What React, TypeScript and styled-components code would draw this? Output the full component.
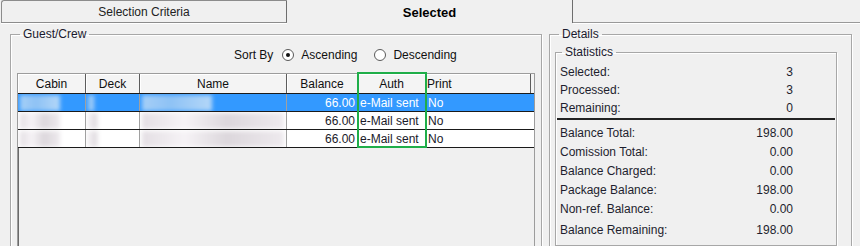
import React from 'react';
import styled, { createGlobalStyle, css } from 'styled-components';

const GlobalStyle = createGlobalStyle`
  html, body {
    margin: 0;
    padding: 0;
    background: #f0f0f0;
  }
  body {
    font-family: "Liberation Sans", Arial, sans-serif;
    font-size: 12px;
    color: #101010;
  }
`;

const Window = styled.div`
  width: 860px;
  height: 246px;
  overflow: hidden;
  background: #f0f0f0;
`;

const TabStrip = styled.div`
  display: flex;
  height: 23px;
  padding-left: 1px;
`;

const Tab = styled.div<{ $active?: boolean }>`
  width: 286px;
  display: flex;
  align-items: center;
  justify-content: center;
  box-sizing: border-box;
  border-right: 1px solid #6e6e6e;
  ${p =>
    p.$active
      ? css`
          font-weight: bold;
          font-size: 13px;
          color: #000;
          padding-top: 2px;
        `
      : css`
          border-left: 1px solid #8c8c8c;
          border-top: 1px solid #8c8c8c;
          border-bottom: 1px solid #8c8c8c;
          border-top-left-radius: 3px;
          color: #222;
          box-shadow: 0 1px 0 #fff;
        `}
`;

const TabFiller = styled.div`
  flex: 1;
  border-bottom: 1px solid #999;
  box-shadow: 0 1px 0 #fff;
`;

const Body = styled.div`
  display: flex;
  gap: 7px;
  padding: 4px 0 0 10px;
`;

const GroupBox = styled.fieldset<{ $width: number }>`
  width: ${p => p.$width}px;
  box-sizing: border-box;
  margin: 0;
  padding: 0;
  border: 1px solid #a7a7a7;
  box-shadow: 1px 1px 0 #fff, inset 1px 1px 0 #fff;
  min-width: 0;
  legend {
    margin-left: 9px;
    padding: 0 3px;
    line-height: 14px;
    color: #1a1a2e;
  }
`;

const GuestInner = styled.div`
  padding: 5px 0 0 6px;
  height: 230px;
`;

const SortRow = styled.div`
  display: flex;
  align-items: center;
  height: 18px;
  padding-left: 217px;
  margin-bottom: 9px;
`;

const SortLabel = styled.span`
  margin-right: 9px;
`;

const RadioOption = styled.label`
  display: inline-flex;
  align-items: center;
  gap: 7px;
  margin-right: 17px;
`;

const RadioDot = styled.span<{ $checked?: boolean }>`
  width: 12px;
  height: 12px;
  box-sizing: border-box;
  border-radius: 50%;
  border: 1px solid #5a5a5a;
  background: #fff;
  display: inline-flex;
  align-items: center;
  justify-content: center;
  &::after {
    content: '';
    width: 4px;
    height: 4px;
    border-radius: 50%;
    background: ${p => (p.$checked ? '#111' : 'transparent')};
  }
`;

const Grid = styled.div`
  position: relative;
  width: 518px;
  height: 190px;
  box-sizing: border-box;
  border: 1px solid #9c9c9c;
  box-shadow: inset 1px 1px 0 #6a6a6a;
  background: #f0f0f0;
`;

const COLS = '68px 54px 147px 71px 68px 105px';

const HeaderRow = styled.div`
  display: grid;
  grid-template-columns: ${COLS};
  height: 19px;
  border-bottom: 1px solid #1a1a1a;
  background: #f4f4f4;
`;

const HeaderCell = styled.div<{ $align?: 'left' | 'center' }>`
  display: flex;
  align-items: center;
  justify-content: ${p => (p.$align === 'left' ? 'flex-start' : 'center')};
  padding-left: ${p => (p.$align === 'left' ? '1px' : '0')};
  border-right: 1px solid #5c5c5c;
  box-shadow: inset 1px 1px 0 #fff;
`;

const DataRow = styled.div<{ $selected?: boolean }>`
  display: grid;
  grid-template-columns: ${COLS};
  height: 17px;
  border-bottom: 1px solid #1a1a1a;
  background: ${p => (p.$selected ? '#3399ff' : '#fff')};
  color: ${p => (p.$selected ? '#fff' : '#1a1a2a')};
`;

const Cell = styled.div<{ $align?: 'left' | 'right' }>`
  display: flex;
  align-items: center;
  justify-content: ${p => (p.$align === 'right' ? 'flex-end' : 'flex-start')};
  padding: 0 2px;
  border-right: 1px solid #a0a0a0;
  overflow: hidden;
  white-space: nowrap;
  &:last-child {
    border-right: none;
  }
`;

const Blur = styled.span<{ $w: number; $tone: 'blue' | 'grey' }>`
  display: block;
  width: ${p => p.$w}px;
  height: 16px;
  filter: blur(2px);
  background: ${p =>
    p.$tone === 'blue'
      ? 'linear-gradient(90deg, #a6cff7, #8ec2f5 40%, #b4d7f8)'
      : 'linear-gradient(90deg, #e4dfe4, #f6f3f6 30%, #dcd7dc 60%, #eeeaee)'};
`;

const Highlight = styled.div`
  position: absolute;
  left: 339px;
  top: -2px;
  width: 70px;
  height: 76px;
  box-sizing: border-box;
  border: 2px solid #1fae49;
  pointer-events: none;
`;

const DetailsInner = styled.div`
  padding: 4px 14px 0 5px;
`;

const StatsBox = styled.fieldset`
  margin: 0;
  padding: 4px 0 4px;
  border: 1px solid #a7a7a7;
  box-shadow: 1px 1px 0 #fff, inset 1px 1px 0 #fff;
  legend {
    margin-left: 6px;
    padding: 0 3px;
    line-height: 14px;
    color: #1a1a2e;
  }
`;

const StatRow = styled.div<{ $h: number }>`
  display: grid;
  grid-template-columns: 1fr 80px;
  align-items: center;
  height: ${p => p.$h}px;
  padding: 0 43px 0 4px;
  color: #1e1e2e;
`;

const StatValue = styled.span`
  text-align: right;
`;

const Separator = styled.div`
  height: 2px;
  background: #222;
  margin: 1px 1px 3px;
`;

const rows = [
  { cabin: 40, deck: 6, name: 70 },
  { cabin: 40, deck: 10, name: 145 },
  { cabin: 40, deck: 10, name: 145 },
];

const countStats = [
  ['Selected:', '3'],
  ['Processed:', '3'],
  ['Remaining:', '0'],
];

const moneyStats = [
  ['Balance Total:', '198.00'],
  ['Comission Total:', '0.00'],
  ['Balance Charged:', '0.00'],
  ['Package Balance:', '198.00'],
  ['Non-ref. Balance:', '0.00'],
];

export default function App() {
  return (
    <Window>
      <GlobalStyle />
      <TabStrip>
        <Tab>Selection Criteria</Tab>
        <Tab $active>Selected</Tab>
        <TabFiller />
      </TabStrip>
      <Body>
        <GroupBox $width={532}>
          <legend>Guest/Crew</legend>
          <GuestInner>
            <SortRow>
              <SortLabel>Sort By</SortLabel>
              <RadioOption>
                <RadioDot $checked />
                Ascending
              </RadioOption>
              <RadioOption>
                <RadioDot />
                Descending
              </RadioOption>
            </SortRow>
            <Grid>
              <HeaderRow>
                <HeaderCell>Cabin</HeaderCell>
                <HeaderCell>Deck</HeaderCell>
                <HeaderCell>Name</HeaderCell>
                <HeaderCell>Balance</HeaderCell>
                <HeaderCell>Auth</HeaderCell>
                <HeaderCell $align="left">Print</HeaderCell>
              </HeaderRow>
              {rows.map((r, i) => (
                <DataRow key={i} $selected={i === 0}>
                  <Cell>
                    <Blur $w={r.cabin} $tone={i === 0 ? 'blue' : 'grey'} />
                  </Cell>
                  <Cell>
                    <Blur $w={r.deck} $tone={i === 0 ? 'blue' : 'grey'} />
                  </Cell>
                  <Cell>
                    <Blur $w={r.name} $tone={i === 0 ? 'blue' : 'grey'} />
                  </Cell>
                  <Cell $align="right">66.00</Cell>
                  <Cell>e-Mail sent</Cell>
                  <Cell>No</Cell>
                </DataRow>
              ))}
              <Highlight />
            </Grid>
          </GuestInner>
        </GroupBox>
        <GroupBox $width={303}>
          <legend>Details</legend>
          <DetailsInner>
            <StatsBox>
              <legend>Statistics</legend>
              {countStats.map(([label, value]) => (
                <StatRow key={label} $h={18}>
                  <span>{label}</span>
                  <StatValue>{value}</StatValue>
                </StatRow>
              ))}
              <Separator />
              {moneyStats.map(([label, value]) => (
                <StatRow key={label} $h={19}>
                  <span>{label}</span>
                  <StatValue>{value}</StatValue>
                </StatRow>
              ))}
              <StatRow $h={23}>
                <span>Balance Remaining:</span>
                <StatValue>198.00</StatValue>
              </StatRow>
            </StatsBox>
          </DetailsInner>
        </GroupBox>
      </Body>
    </Window>
  );
}
